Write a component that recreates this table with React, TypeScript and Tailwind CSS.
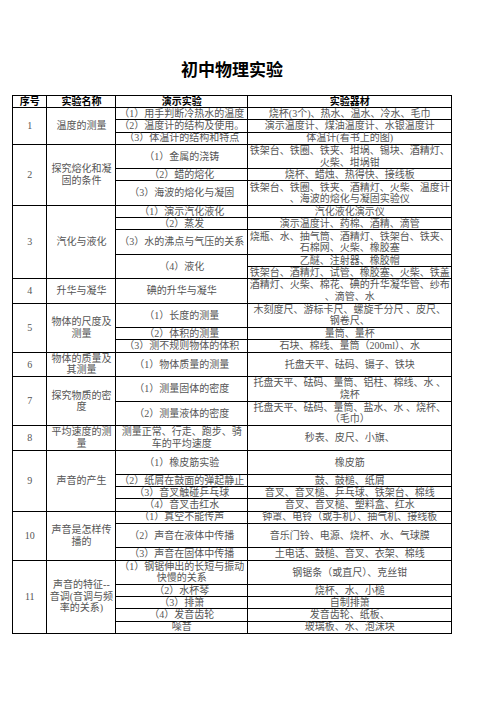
import React from 'react';

type C = { t: string[]; s?: number };

type Group = { n: string; name: string[]; span: number; cells: C[] };

const spanCls: Record<number, string> = {
  1: '',
  2: 'row-span-2',
  3: 'row-span-3',
  4: 'row-span-4',
  5: 'row-span-5',
};

const groups: Group[] = [
  {
    n: '1',
    name: ['温度的测量'],
    span: 3,
    cells: [
      { t: ['（1）用手判断冷热水的温度'] },
      { t: ['烧杯(3个)、热水、温水、冷水、毛巾'] },
      { t: ['（2）温度计的结构及使用。'] },
      { t: ['演示温度计、煤油温度计、水银温度计'] },
      { t: ['（3）体温计的结构和特点'] },
      { t: ['体温计(看书上的图)'] },
    ],
  },
  {
    n: '2',
    name: ['探究熔化和凝', '固的条件'],
    span: 3,
    cells: [
      { t: ['（1）金属的浇铸'] },
      { t: ['铁架台、铁圈、铁夹、坩埚、锡块、酒精灯、', '火柴、坩埚钳'] },
      { t: ['（2）蜡的熔化'] },
      { t: ['烧杯、蜡烛、热得快、接线板'] },
      { t: ['（3）海波的熔化与凝固'] },
      { t: ['铁架台、铁圈、铁夹、酒精灯、火柴、温度计', '、海波的熔化与凝固实验仪'] },
    ],
  },
  {
    n: '3',
    name: ['汽化与液化'],
    span: 5,
    cells: [
      { t: ['（1）演示汽化液化'] },
      { t: ['汽化液化演示仪'] },
      { t: ['（2）蒸发'] },
      { t: ['演示温度计、药棉、酒精、滴管'] },
      { t: ['（3）水的沸点与气压的关系'] },
      { t: ['烧瓶、水、抽气筒、酒精灯、铁架台、铁夹、', '石棉网、火柴、橡胶塞'] },
      { t: ['（4）液化'], s: 2 },
      { t: ['乙醚、注射器、橡胶帽'] },
      { t: ['铁架台、酒精灯、试管、橡胶塞、火柴、铁盖'] },
    ],
  },
  {
    n: '4',
    name: ['升华与凝华'],
    span: 1,
    cells: [
      { t: ['碘的升华与凝华'] },
      { t: ['酒精灯、火柴、棉花、碘的升华凝华管、纱布', '、滴管、水'] },
    ],
  },
  {
    n: '5',
    name: ['物体的尺度及', '测量'],
    span: 3,
    cells: [
      { t: ['（1）长度的测量'] },
      { t: ['木刻度尺、游标卡尺、螺旋千分尺 、皮尺、', '钢卷尺、'] },
      { t: ['（2）体积的测量'] },
      { t: ['量筒、量杯'] },
      { t: ['（3）测不规则物体的体积'] },
      { t: ['石块、棉线、量筒（200ml）、水'] },
    ],
  },
  {
    n: '6',
    name: ['物体的质量及', '其测量'],
    span: 1,
    cells: [{ t: ['（1）物体质量的测量'] }, { t: ['托盘天平、砝码、镊子、铁块'] }],
  },
  {
    n: '7',
    name: ['探究物质的密', '度'],
    span: 2,
    cells: [
      { t: ['（1）测量固体的密度'] },
      { t: ['托盘天平、砝码、量筒、铝柱、棉线、水 、', '烧杯'] },
      { t: ['（2）测量液体的密度'] },
      { t: ['托盘天平、砝码、量筒、盐水、水 、烧杯、', '（毛巾）'] },
    ],
  },
  {
    n: '8',
    name: ['平均速度的测', '量'],
    span: 1,
    cells: [{ t: ['测量正常、行走、跑步、骑', '车的平均速度'] }, { t: ['秒表、皮尺、小旗、'] }],
  },
  {
    n: '9',
    name: ['声音的产生'],
    span: 4,
    cells: [
      { t: ['（1）橡皮筋实验'] },
      { t: ['橡皮筋'] },
      { t: ['（2）纸屑在鼓面的弹起静止'] },
      { t: ['鼓、鼓槌、纸屑'] },
      { t: ['（3）音叉触碰乒乓球'] },
      { t: ['音叉、音叉槌、乒乓球、铁架台、棉线'] },
      { t: ['（4）音叉击红水'] },
      { t: ['音叉、音叉槌、塑料盒、红水'] },
    ],
  },
  {
    n: '10',
    name: ['声音是怎样传', '播的'],
    span: 3,
    cells: [
      { t: ['（1）真空不能传声'] },
      { t: ['钟罩、电铃（或手机）、抽气机、接线板'] },
      { t: ['（2）声音在液体中传播'] },
      { t: ['音乐门铃、电源、烧杯、水、气球膜'] },
      { t: ['（3）声音在固体中传播'] },
      { t: ['土电话、鼓槌、音叉、衣架、棉线'] },
    ],
  },
  {
    n: '11',
    name: ['声音的特征--', '音调(音调与频', '率的关系)'],
    span: 5,
    cells: [
      { t: ['（1）钢锯伸出的长短与振动', '快慢的关系'] },
      { t: ['钢锯条（或直尺）、克丝钳'] },
      { t: ['（2）水杯琴'] },
      { t: ['烧杯、水、小槌'] },
      { t: ['（3）排箫'] },
      { t: ['自制排箫'] },
      { t: ['（4）发音齿轮'] },
      { t: ['发音齿轮、纸板、'] },
      { t: ['噪音'] },
      { t: ['玻璃板、水、泡沫块'] },
    ],
  },
];

const Cell: React.FC<{ t: string[]; s?: number; head?: boolean }> = ({ t, s = 1, head }) => (
  <div
    className={`${spanCls[s]} bg-white flex flex-col items-center justify-center text-center overflow-visible ${
      head ? 'font-bold text-black' : 'text-[#555555]'
    }`}
  >
    {t.map((line, i) => (
      <span key={i} className="whitespace-nowrap leading-[11.5px]">
        {line}
      </span>
    ))}
  </div>
);

export default function App() {
  return (
    <div className="w-[496px] h-[702px] bg-white font-['Liberation_Serif','Noto_Sans_CJK_SC',serif]">
      {/* Title */}
      <div className="ml-[12px] w-[440px] pt-[60px] text-center text-[17px] leading-[18px] font-bold text-black font-['Noto_Sans_CJK_SC',sans-serif]">
        初中物理实验
      </div>

      {/* Table */}
      <div className="ml-[12px] mt-[17px] w-fit grid grid-cols-[33.4px_68px_130.6px_203.4px] grid-rows-[11.2px_11.2px_11.2px_11.2px_23.5px_11.2px_23.5px_11.2px_11.2px_23.5px_11.2px_11.2px_23.5px_23.5px_11.2px_11.2px_23.5px_23.5px_23.5px_23.5px_23.5px_11.2px_11.2px_11.2px_11.2px_23.5px_11.2px_23.5px_11.2px_11.2px_11.2px_11.2px] gap-px p-px bg-black text-[10px]">
        <Cell t={['序号']} head />
        <Cell t={['实验名称']} head />
        <Cell t={['演示实验']} head />
        <Cell t={['实验器材']} head />
        {groups.map((g) => (
          <React.Fragment key={g.n}>
            <Cell t={[g.n]} s={g.span} />
            <Cell t={g.name} s={g.span} />
            {g.cells.map((c, i) => (
              <Cell key={i} t={c.t} s={c.s} />
            ))}
          </React.Fragment>
        ))}
      </div>
    </div>
  );
}
